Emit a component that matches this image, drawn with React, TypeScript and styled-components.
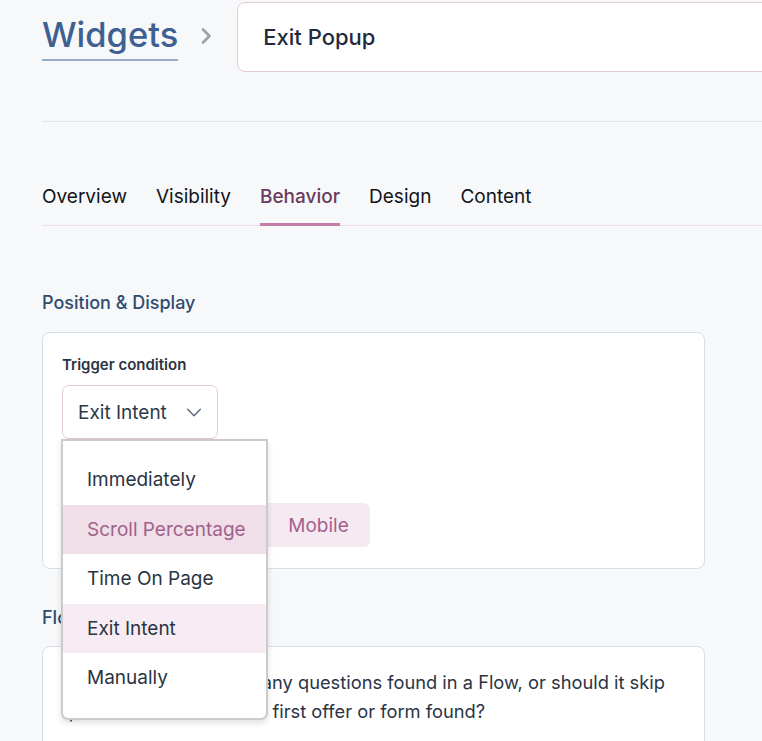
import React from 'react';
import styled, { createGlobalStyle } from 'styled-components';

const GlobalStyle = createGlobalStyle`
  html, body {
    margin: 0;
    padding: 0;
    background: #f7f8fa;
    overflow: hidden;
  }
  body {
    font-family: Inter, 'Noto Sans', sans-serif;
    color: #1f2a3c;
  }
`;

const Page = styled.div`
  padding: 0 0 0 42px;
  width: 900px;
`;

const Header = styled.div`
  display: flex;
  align-items: center;
  height: 72px;
`;

const Title = styled.h1`
  margin: 0;
  font-size: 34.5px;
  font-weight: 500;
  color: #3e6191;
  line-height: 40px;
  padding-bottom: 4px;
  border-bottom: 2px solid #98abc5;
  transform: translateY(2px);
`;

const Crumb = styled.span`
  display: flex;
  margin: 0 23px 0 20px;
`;

const NameInput = styled.div`
  width: 560px;
  height: 70px;
  box-sizing: border-box;
  display: flex;
  align-items: center;
  padding-left: 25px;
  background: #fff;
  border: 1px solid #e5c9dc;
  border-radius: 8px;
  font-size: 22px;
  font-weight: 500;
  color: #1f2b3d;
  margin-top: 1px;
`;

const Divider = styled.div`
  margin-top: 49px;
  border-top: 1px solid #e3e4e8;
`;

const Tabs = styled.div`
  display: flex;
  gap: 29px;
  margin-top: 55px;
  border-bottom: 1px solid #f1dde9;
`;

const Tab = styled.div<{ $active?: boolean }>`
  font-size: 19px;
  padding: 8px 0 15px;
  color: ${(p) => (p.$active ? '#6b3b5c' : '#121417')};
  font-weight: ${(p) => (p.$active ? 500 : 400)};
  border-bottom: 3px solid ${(p) => (p.$active ? '#c47ba6' : 'transparent')};
  margin-bottom: -1px;
`;

const SectionTitle = styled.h2`
  margin: 65px 0 0;
  font-size: 18px;
  font-weight: 500;
  color: #2f4b6e;
  line-height: 24px;
`;

const Card = styled.div`
  width: 663px;
  box-sizing: border-box;
  margin-top: 17px;
  background: #fff;
  border: 1px solid #d6dee8;
  border-radius: 8px;
  padding: 21px 19px 21px;
`;

const Label = styled.div`
  font-size: 15px;
  font-weight: 600;
  color: #2a3442;
  line-height: 22px;
`;

const SelectWrap = styled.div`
  position: relative;
  margin-top: 9px;
  width: 156px;
`;

const SelectBox = styled.div`
  height: 54px;
  box-sizing: border-box;
  display: flex;
  align-items: center;
  justify-content: space-between;
  padding: 0 12px 0 15px;
  border: 1px solid #e8c7db;
  border-radius: 7px;
  font-size: 19px;
  color: #2d3748;
`;

const Menu = styled.div`
  position: absolute;
  top: 54px;
  left: -1px;
  width: 207px;
  box-sizing: border-box;
  background: #fff;
  border: 2px solid #cdcac8;
  border-radius: 0 0 7px 7px;
  box-shadow: 0 3px 6px rgba(0, 0, 0, 0.12);
  padding: 14px 0 15px;
  z-index: 5;
`;

const MenuItem = styled.div<{ $bg?: string; $color?: string }>`
  height: 49.5px;
  display: flex;
  align-items: center;
  padding-left: 24px;
  font-size: 19px;
  background: ${(p) => p.$bg || 'transparent'};
  color: ${(p) => p.$color || '#2a3444'};
`;

const SubLabel = styled(Label)`
  margin-top: 30px;
`;

const Segmented = styled.div`
  display: inline-flex;
  margin-top: 12px;
  height: 44px;
  background: #f6eaf2;
  border-radius: 6px;
  width: 308px;
`;

const Segment = styled.div<{ $active?: boolean }>`
  flex: 1;
  display: flex;
  align-items: center;
  justify-content: center;
  font-size: 19px;
  color: #a65f8c;
  padding-left: ${(p) => (p.$active ? '102px' : '0')};
`;

const SecondTitle = styled(SectionTitle)`
  margin-top: 37px;
`;

const TextCard = styled(Card)`
  margin-top: 16px;
  padding: 21px 20px 40px 19px;
  font-size: 18.3px;
  line-height: 29px;
  color: #2a3444;
`;

const Chevron = ({ size, color, stroke = 2 }: { size: number; color: string; stroke?: number }) => (
  <svg width={size} height={size} viewBox="0 0 24 24" fill="none" stroke={color} strokeWidth={stroke} strokeLinecap="round" strokeLinejoin="round">
    <path d="m5 9 7 7 7-7" />
  </svg>
);

const options = [
  { label: 'Immediately' },
  { label: 'Scroll Percentage', bg: '#f0dee9', color: '#a0628b' },
  { label: 'Time On Page' },
  { label: 'Exit Intent', bg: '#f7ecf3' },
  { label: 'Manually' },
];

const App: React.FC = () => (
  <>
    <GlobalStyle />
    <Page>
      <Header>
        <Title>Widgets</Title>
        <Crumb>
          <svg width="16" height="20" viewBox="0 0 16 20" fill="none" stroke="#9aa1ab" strokeWidth="2.6" strokeLinecap="round" strokeLinejoin="round">
            <path d="M5 3.5l6.5 6.5-6.5 6.5" />
          </svg>
        </Crumb>
        <NameInput>Exit Popup</NameInput>
      </Header>
      <Divider />
      <Tabs>
        <Tab>Overview</Tab>
        <Tab>Visibility</Tab>
        <Tab $active>Behavior</Tab>
        <Tab>Design</Tab>
        <Tab>Content</Tab>
      </Tabs>
      <SectionTitle>Position &amp; Display</SectionTitle>
      <Card>
        <Label>Trigger condition</Label>
        <SelectWrap>
          <SelectBox>
            Exit Intent
            <Chevron size={22} color="#5a6677" stroke={1.5} />
          </SelectBox>
          <Menu>
            {options.map((o) => (
              <MenuItem key={o.label} $bg={o.bg} $color={o.color}>
                {o.label}
              </MenuItem>
            ))}
          </Menu>
        </SelectWrap>
        <SubLabel>Show on</SubLabel>
        <Segmented>
          <Segment>Desktop</Segment>
          <Segment $active>Mobile</Segment>
        </Segmented>
      </Card>
      <SecondTitle>Flow Behavior</SecondTitle>
      <TextCard>
        Should this widget ask any questions found in a Flow, or should it skip questions and show the first offer or form found?
      </TextCard>
    </Page>
  </>
);

export default App;
